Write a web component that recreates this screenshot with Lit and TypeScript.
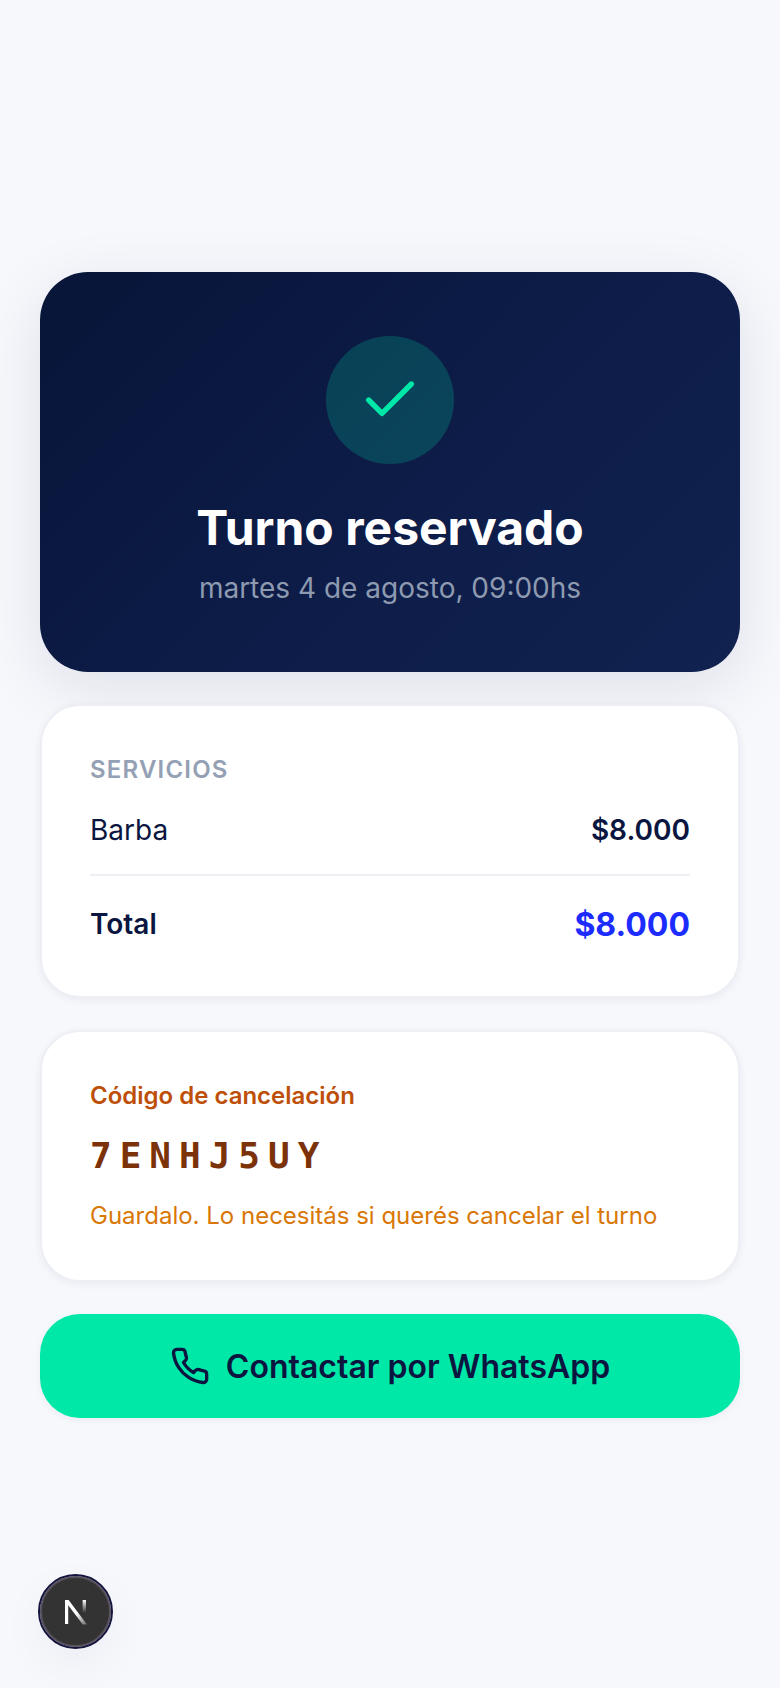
import { LitElement, html, css } from "lit";
import { customElement } from "lit/decorators.js";

@customElement("app-root")
export class AppRoot extends LitElement {
  static styles = css`
    :host {
      display: block;
      font-family: Inter, "Noto Sans", sans-serif;
      color: #0a1640;
    }
    .page {
      min-height: 1688px;
      box-sizing: border-box;
      background: #f7f8fc;
      padding: 2px 40px 0;
      display: flex;
      flex-direction: column;
      justify-content: center;
      gap: 32px;
    }
    .hero {
      height: 400px;
      box-sizing: border-box;
      padding-top: 64px;
      border-radius: 48px;
      background: linear-gradient(135deg, #071538 0%, #0d1c47 50%, #112250 100%);
      box-shadow: 0 16px 64px rgba(10, 22, 64, 0.1);
      display: flex;
      flex-direction: column;
      align-items: center;
    }
    .check {
      width: 128px;
      height: 128px;
      border-radius: 50%;
      background: rgba(0, 232, 168, 0.2);
      display: flex;
      align-items: center;
      justify-content: center;
      color: #00e8a8;
    }
    h1 {
      margin: 32px 0 0;
      font-size: 48px;
      line-height: 64px;
      font-weight: 700;
      color: #fff;
    }
    .when {
      margin-top: 8px;
      font-size: 28px;
      line-height: 40px;
      color: #8d9ab0;
    }
    .card {
      background: #fff;
      border: 2px solid #edeff5;
      border-radius: 40px;
      padding: 48px;
      box-shadow: 0 2px 8px rgba(10, 22, 64, 0.06);
    }
    .label {
      font-size: 24px;
      line-height: 32px;
      font-weight: 600;
      letter-spacing: 1.2px;
      color: #94a0b4;
    }
    .row {
      display: flex;
      justify-content: space-between;
      align-items: center;
      font-size: 28px;
      line-height: 40px;
    }
    .row.item {
      margin-top: 24px;
      padding-bottom: 24px;
      border-bottom: 2px solid #edeff5;
    }
    .price {
      font-weight: 600;
    }
    .row.total {
      margin-top: 24px;
      height: 48px;
      line-height: 48px;
      font-weight: 600;
    }
    .total-price {
      padding-top: 2px;
      font-size: 32px;
      font-weight: 700;
      color: #1c2cff;
    }
    .code-title {
      font-size: 24px;
      line-height: 32px;
      font-weight: 600;
      color: #bd4f08;
    }
    .code {
      margin-top: 16px;
      font-family: "DejaVu Sans Mono", monospace;
      font-size: 36px;
      line-height: 56px;
      font-weight: 700;
      letter-spacing: 8px;
      color: #7c3209;
    }
    .hint {
      margin-top: 16px;
      font-size: 24px;
      line-height: 32px;
      color: #d97706;
    }
    .cta {
      height: 104px;
      border-radius: 40px;
      background: #00e8a8;
      color: #0a1640;
      font-size: 32px;
      font-weight: 600;
      box-shadow: 0 2px 8px rgba(10, 22, 64, 0.05);
      display: flex;
      align-items: center;
      justify-content: center;
      gap: 16px;
    }
    .next-badge {
      position: fixed;
      left: 40px;
      bottom: 41px;
      width: 71px;
      height: 71px;
      box-sizing: border-box;
      border-radius: 50%;
      background: #333;
      border: 2px solid #56505a;
      outline: 2px solid #14143c;
      box-shadow: 0 16px 48px rgba(10, 22, 64, 0.05);
      display: flex;
      align-items: center;
      justify-content: center;
    }
  `;

  render() {
    return html`
      <div class="page">
        <section class="hero">
          <div class="check">
            <svg width="64" height="64" viewBox="0 0 24 24" fill="none" stroke="currentColor" stroke-width="2" stroke-linecap="round" stroke-linejoin="round">
              <path d="M20 6 9 17l-5-5" />
            </svg>
          </div>
          <h1>Turno reservado</h1>
          <div class="when">martes 4 de agosto, 09:00hs</div>
        </section>

        <section class="card">
          <div class="label">SERVICIOS</div>
          <div class="row item">
            <span>Barba</span>
            <span class="price">$8.000</span>
          </div>
          <div class="row total">
            <span>Total</span>
            <span class="total-price">$8.000</span>
          </div>
        </section>

        <section class="card">
          <div class="code-title">Código de cancelación</div>
          <div class="code">7ENHJ5UY</div>
          <div class="hint">Guardalo. Lo necesitás si querés cancelar el turno</div>
        </section>

        <div class="cta">
          <svg width="40" height="40" viewBox="0 0 24 24" fill="none" stroke="currentColor" stroke-width="2" stroke-linecap="round" stroke-linejoin="round">
            <path d="M22 16.92v3a2 2 0 0 1-2.18 2 19.79 19.79 0 0 1-8.63-3.07 19.5 19.5 0 0 1-6-6 19.79 19.79 0 0 1-3.07-8.67A2 2 0 0 1 4.11 2h3a2 2 0 0 1 2 1.72 12.84 12.84 0 0 0 .7 2.81 2 2 0 0 1-.45 2.11L8.09 9.91a16 16 0 0 0 6 6l1.27-1.27a2 2 0 0 1 2.11-.45 12.84 12.84 0 0 0 2.81.7A2 2 0 0 1 22 16.92z" />
          </svg>
          Contactar por WhatsApp
        </div>
      </div>

      <div class="next-badge">
        <svg width="32" height="32" viewBox="0 0 32 32" fill="none">
          <defs>
            <linearGradient id="nd" x1="0" y1="0" x2="1" y2="1">
              <stop offset="0.55" stop-color="#fff" />
              <stop offset="1" stop-color="#fff" stop-opacity="0.25" />
            </linearGradient>
            <linearGradient id="nb" x1="0" y1="0" x2="0" y2="1">
              <stop offset="0" stop-color="#fff" />
              <stop offset="0.8" stop-color="#fff" stop-opacity="0" />
            </linearGradient>
          </defs>
          <path d="M5 4h3.6L27 28.5h-4.2L8.2 9.2V28H5z" fill="url(#nd)" />
          <rect x="22.6" y="4" width="3.4" height="16" fill="url(#nb)" />
        </svg>
      </div>
    `;
  }
}
